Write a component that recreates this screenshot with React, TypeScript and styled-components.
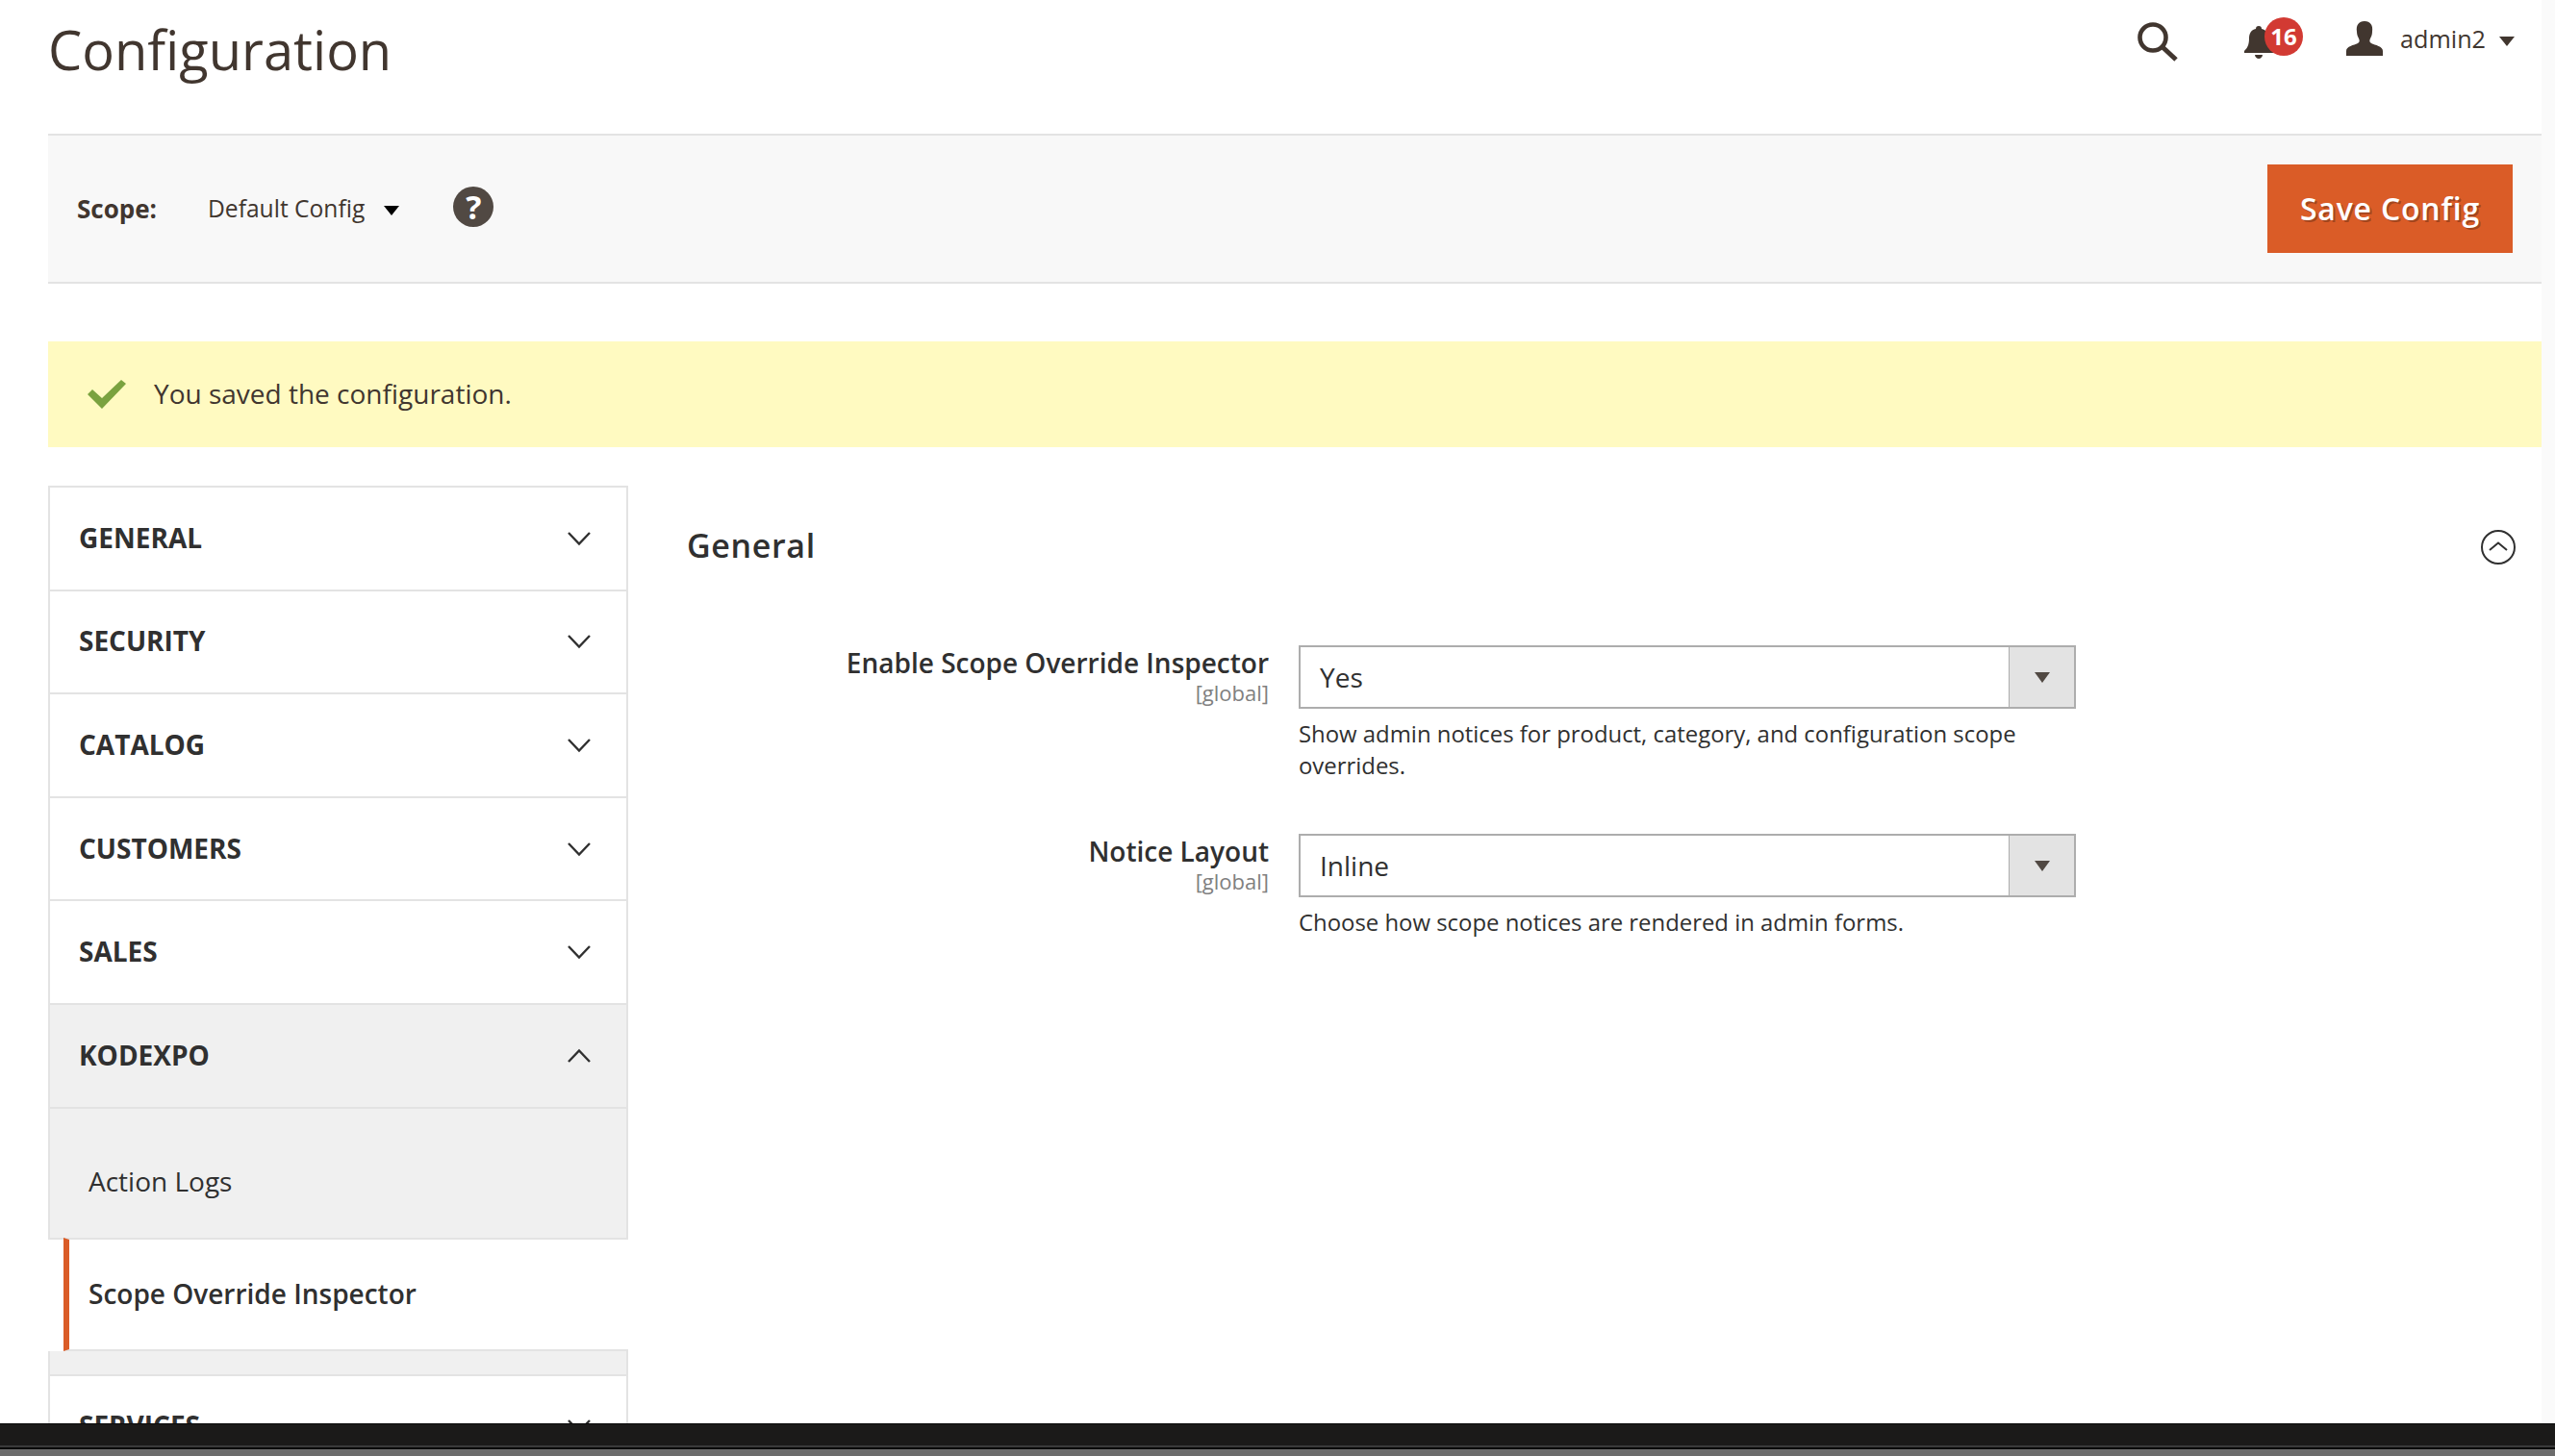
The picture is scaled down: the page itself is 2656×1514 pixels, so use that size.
import React from 'react';
import styled, { createGlobalStyle } from 'styled-components';

const GlobalStyle = createGlobalStyle`
  html, body {
    margin: 0;
    padding: 0;
    background: #fff;
  }
  body {
    font-family: 'Open Sans', 'Noto Sans', 'Liberation Sans', sans-serif;
    color: #41362f;
  }
`;

const Frame = styled.div`
  width: 2656px;
  height: 1514px;
  display: flex;
  flex-direction: column;
  overflow: hidden;
`;

const Viewport = styled.div`
  flex: 1;
  min-height: 0;
  display: flex;
  overflow: hidden;
`;

const Content = styled.main`
  flex: 1;
  min-width: 0;
  padding-left: 50px;
`;

const Gutter = styled.div`
  width: 14px;
  background: #fafafa;
`;

const PageHeader = styled.header`
  height: 139px;
  display: flex;
  justify-content: space-between;
  align-items: flex-start;
`;

const PageTitle = styled.h1`
  margin: 18px 0 0;
  font-size: 56px;
  line-height: 66px;
  font-weight: 400;
  color: #41362f;
`;

const Actions = styled.div`
  display: flex;
  align-items: flex-start;
  padding-top: 18px;
  margin-right: 28px;
`;

const SearchIcon = styled.svg`
  width: 42px;
  height: 42px;
  margin: 5px 69px 0 0;
`;

const Notifications = styled.div`
  position: relative;
  width: 61px;
  height: 40px;
  margin-right: 45px;
`;

const BellIcon = styled.svg`
  position: absolute;
  left: 0;
  top: 9px;
  width: 30px;
  height: 34px;
`;

const Badge = styled.span`
  position: absolute;
  left: 21px;
  top: 0;
  width: 40px;
  height: 40px;
  border-radius: 50%;
  background: #d23a33;
  color: #fff;
  font-size: 24px;
  line-height: 40px;
  font-weight: 700;
  text-align: center;
`;

const UserIcon = styled.svg`
  width: 38px;
  height: 36px;
  margin: 4px 18px 0 0;
`;

const UserName = styled.span`
  padding-top: 2px;
  font-size: 25.2px;
  line-height: 40px;
  color: #41362f;
`;

const Caret = styled.span<{ $color?: string; $w?: number; $h?: number }>`
  display: inline-block;
  width: 0;
  height: 0;
  border-left: ${({ $w }) => $w ?? 8}px solid transparent;
  border-right: ${({ $w }) => $w ?? 8}px solid transparent;
  border-top: ${({ $h }) => $h ?? 10}px solid ${({ $color }) => $color ?? '#41362f'};
`;

const UserCaret = styled(Caret)`
  margin: 20px 0 0 14px;
`;

const Toolbar = styled.section`
  height: 152px;
  display: flex;
  align-items: center;
  justify-content: space-between;
  background: #f8f8f8;
  border-top: 2px solid #e3e3e3;
  border-bottom: 2px solid #e3e3e3;
`;

const ScopeGroup = styled.div`
  display: flex;
  align-items: center;
  padding-left: 30px;
`;

const ScopeLabel = styled.span`
  font-size: 26px;
  font-weight: 700;
  color: #41362f;
  width: 136px;
`;

const ScopeValue = styled.span`
  padding-bottom: 1px;
  font-size: 24.6px;
  color: #41362f;
`;

const ScopeCaret = styled(Caret)`
  margin: 4px 0 0 20px;
`;

const HelpBadge = styled.span`
  width: 42px;
  height: 42px;
  margin: -5px 0 0 56px;
  border-radius: 50%;
  background: #514943;
  color: #fff;
  font-size: 34px;
  line-height: 42px;
  font-weight: 700;
  text-align: center;
`;

const SaveButton = styled.button`
  width: 255px;
  height: 92px;
  margin-right: 30px;
  padding: 0 0 2px;
  border: 0;
  background: #da5c27;
  color: #fff;
  font-family: inherit;
  font-size: 32px;
  font-weight: 600;
  letter-spacing: 0.8px;
  text-shadow: 2px 2px 0 rgba(0, 0, 0, 0.25);
`;

const Message = styled.div`
  height: 110px;
  margin-top: 60px;
  display: flex;
  align-items: center;
  background: #fffac1;
  color: #41362f;
  font-size: 28px;
`;

const MessageText = styled.span`
  padding-bottom: 3px;
`;

const CheckIcon = styled.svg`
  width: 40px;
  height: 30px;
  margin: 0 29px 0 41px;
`;

const Columns = styled.div`
  display: grid;
  grid-template-columns: 603px 1fr;
  margin-top: 40px;
`;

const Sidebar = styled.nav`
  display: flex;
  flex-direction: column;
  border-top: 2px solid #e3e3e3;
`;

const TabRow = styled.div<{ $open?: boolean }>`
  flex: none;
  height: 105.6px;
  display: flex;
  align-items: center;
  justify-content: space-between;
  padding: 0 36px 0 30px;
  background: ${({ $open }) => ($open ? '#f0f0f0' : '#fff')};
  border-left: 2px solid #e3e3e3;
  border-right: 2px solid #e3e3e3;
  border-bottom: 2px solid #e3e3e3;
  font-size: 28px;
  font-weight: 700;
  color: #303030;
`;

const TabName = styled.span`
  padding-bottom: 2px;
`;

const Chevron = styled.svg`
  width: 26px;
  height: 16px;
`;

const SubItem = styled.div`
  height: 118px;
  display: flex;
  align-items: center;
  padding: 16px 0 0 40px;
  background: #f0f0f0;
  border-left: 2px solid #e3e3e3;
  border-right: 2px solid #e3e3e3;
  border-bottom: 2px solid #e3e3e3;
  border-bottom-right-radius: 2px;
  font-size: 28px;
  color: #303030;
`;

const ActiveItem = styled.div`
  height: 112px;
  display: flex;
  align-items: center;
  margin: -2px 0 0 16px;
  padding: 0 0 2px 20px;
  background: #fff;
  border-top: 2px solid #e3e3e3;
  border-bottom: 2px solid #e3e3e3;
  border-left: 6px solid #da5c27;
  font-size: 28px;
  font-weight: 600;
  color: #303030;
`;

const SubSpacer = styled.div`
  height: 24px;
  background: #f0f0f0;
  border-left: 2px solid #e3e3e3;
  border-right: 2px solid #e3e3e3;
  border-bottom: 2px solid #e3e3e3;
`;

const Panel = styled.section`
  padding: 0 26px 0 61px;
`;

const PanelHeader = styled.div`
  height: 72px;
  margin-top: 26px;
  display: flex;
  align-items: center;
  justify-content: space-between;
`;

const PanelTitle = styled.h2`
  margin: 0;
  font-size: 34px;
  font-weight: 600;
  letter-spacing: 0.65px;
  color: #303030;
`;

const CollapseIcon = styled.svg`
  width: 38px;
  height: 38px;
  margin-top: 4px;
`;

const Field = styled.div`
  display: grid;
  grid-template-columns: 605px 808px;
  column-gap: 31px;
  margin-top: 68px;
  & + & {
    margin-top: 55px;
  }
`;

const FieldLabel = styled.div`
  text-align: right;
`;

const LabelText = styled.div`
  font-size: 28px;
  line-height: 36px;
  font-weight: 600;
  color: #303030;
`;

const ScopeHint = styled.div`
  font-size: 22px;
  line-height: 26px;
  color: #808080;
`;

const SelectBox = styled.div`
  height: 66px;
  display: flex;
  border: 2px solid #adadad;
  box-sizing: border-box;
  background: #fff;
`;

const SelectValue = styled.span`
  flex: 1;
  padding-left: 20px;
  font-size: 28px;
  line-height: 62px;
  color: #303030;
`;

const SelectArrow = styled.span`
  width: 67px;
  display: flex;
  align-items: center;
  justify-content: center;
  background: #e3e3e3;
  border-left: 1px solid #adadad;
`;

const Note = styled.p`
  margin: 9px 0 0;
  font-size: 23.9px;
  line-height: 33px;
  color: #303030;
`;

const BottomBar = styled.footer`
  flex: none;
  height: 34px;
  box-sizing: border-box;
  display: flex;
  flex-direction: column;
  background: #1b1a19;
  border-top: 1px solid #0a0a0a;
`;

const BarLight = styled.div`
  height: 2px;
  margin-top: 22px;
  background: #3a3a3a;
`;

const BarLine = styled.div`
  height: 2px;
  background: #0a0a0a;
`;

const BarGray = styled.div`
  flex: 1;
  background: #6c6c6c;
`;

const sections = ['GENERAL', 'SECURITY', 'CATALOG', 'CUSTOMERS', 'SALES'];

const ChevronDown = () => (
  <Chevron viewBox="0 0 26 16" fill="none" stroke="#303030" strokeWidth="2.4">
    <path d="M2 2l11 11.5L24 2" />
  </Chevron>
);

const ChevronUp = () => (
  <Chevron viewBox="0 0 26 16" fill="none" stroke="#303030" strokeWidth="2.4">
    <path d="M2 14L13 2.5 24 14" />
  </Chevron>
);

export default function App() {
  return (
    <Frame>
      <GlobalStyle />
      <Viewport>
        <Content>
          <PageHeader>
            <PageTitle>Configuration</PageTitle>
            <Actions>
              <SearchIcon viewBox="0 0 42 42" fill="none" stroke="#41362f">
                <circle cx="16" cy="16" r="13.5" strokeWidth="4.6" />
                <path d="M25 25l15 14" strokeWidth="5" />
              </SearchIcon>
              <Notifications>
                <BellIcon viewBox="0 0 30 34" fill="#41362f">
                  <path d="M15 0c2 0 3 1 3 3 5 1 7 5 7 10 0 7 2 10 5 13v2H0v-2c3-3 5-6 5-13 0-5 2-9 7-10 0-2 1-3 3-3z" />
                  <path d="M11 30h8c0 2-2 4-4 4s-4-2-4-4z" />
                </BellIcon>
                <Badge>16</Badge>
              </Notifications>
              <UserIcon viewBox="0 0 38 36" fill="#41362f">
                <path d="M19 0c6 0 9 4 8 11 0 3-1 5-2 7-1 2-1 4 1 5 4 2 12 3 12 8v5H0v-5c0-5 8-6 12-8 2-1 2-3 1-5-1-2-2-4-2-7-1-7 2-11 8-11z" />
              </UserIcon>
              <UserName>admin2</UserName>
              <UserCaret />
            </Actions>
          </PageHeader>

          <Toolbar>
            <ScopeGroup>
              <ScopeLabel>Scope:</ScopeLabel>
              <ScopeValue>Default Config</ScopeValue>
              <ScopeCaret $color="#000" />
              <HelpBadge>?</HelpBadge>
            </ScopeGroup>
            <SaveButton>Save Config</SaveButton>
          </Toolbar>

          <Message>
            <CheckIcon viewBox="0 0 40 30" fill="#7aa23f">
              <path d="M0 15l5-5 10 9L35 0l5 4-25 26z" />
            </CheckIcon>
            <MessageText>You saved the configuration.</MessageText>
          </Message>

          <Columns>
            <Sidebar>
              {sections.map(name => (
                <TabRow key={name}>
                  <TabName>{name}</TabName>
                  <ChevronDown />
                </TabRow>
              ))}
              <TabRow $open>
                <TabName>KODEXPO</TabName>
                <ChevronUp />
              </TabRow>
              <SubItem>Action Logs</SubItem>
              <ActiveItem>Scope Override Inspector</ActiveItem>
              <SubSpacer />
              <TabRow>
                <TabName>SERVICES</TabName>
                <ChevronDown />
              </TabRow>
            </Sidebar>

            <Panel>
              <PanelHeader>
                <PanelTitle>General</PanelTitle>
                <CollapseIcon viewBox="0 0 38 38" fill="none" stroke="#303030" strokeWidth="2">
                  <circle cx="19" cy="19" r="17" />
                  <path d="M10 22l9-7.5 9 7.5" />
                </CollapseIcon>
              </PanelHeader>

              <Field>
                <FieldLabel>
                  <LabelText>Enable Scope Override Inspector</LabelText>
                  <ScopeHint>[global]</ScopeHint>
                </FieldLabel>
                <div>
                  <SelectBox>
                    <SelectValue>Yes</SelectValue>
                    <SelectArrow>
                      <Caret $color="#514943" $w={8} $h={11} />
                    </SelectArrow>
                  </SelectBox>
                  <Note>
                    Show admin notices for product, category, and configuration scope overrides.
                  </Note>
                </div>
              </Field>

              <Field>
                <FieldLabel>
                  <LabelText>Notice Layout</LabelText>
                  <ScopeHint>[global]</ScopeHint>
                </FieldLabel>
                <div>
                  <SelectBox>
                    <SelectValue>Inline</SelectValue>
                    <SelectArrow>
                      <Caret $color="#514943" $w={8} $h={11} />
                    </SelectArrow>
                  </SelectBox>
                  <Note>Choose how scope notices are rendered in admin forms.</Note>
                </div>
              </Field>
            </Panel>
          </Columns>
        </Content>
        <Gutter />
      </Viewport>
      <BottomBar>
        <BarLight />
        <BarLine />
        <BarGray />
      </BottomBar>
    </Frame>
  );
}
